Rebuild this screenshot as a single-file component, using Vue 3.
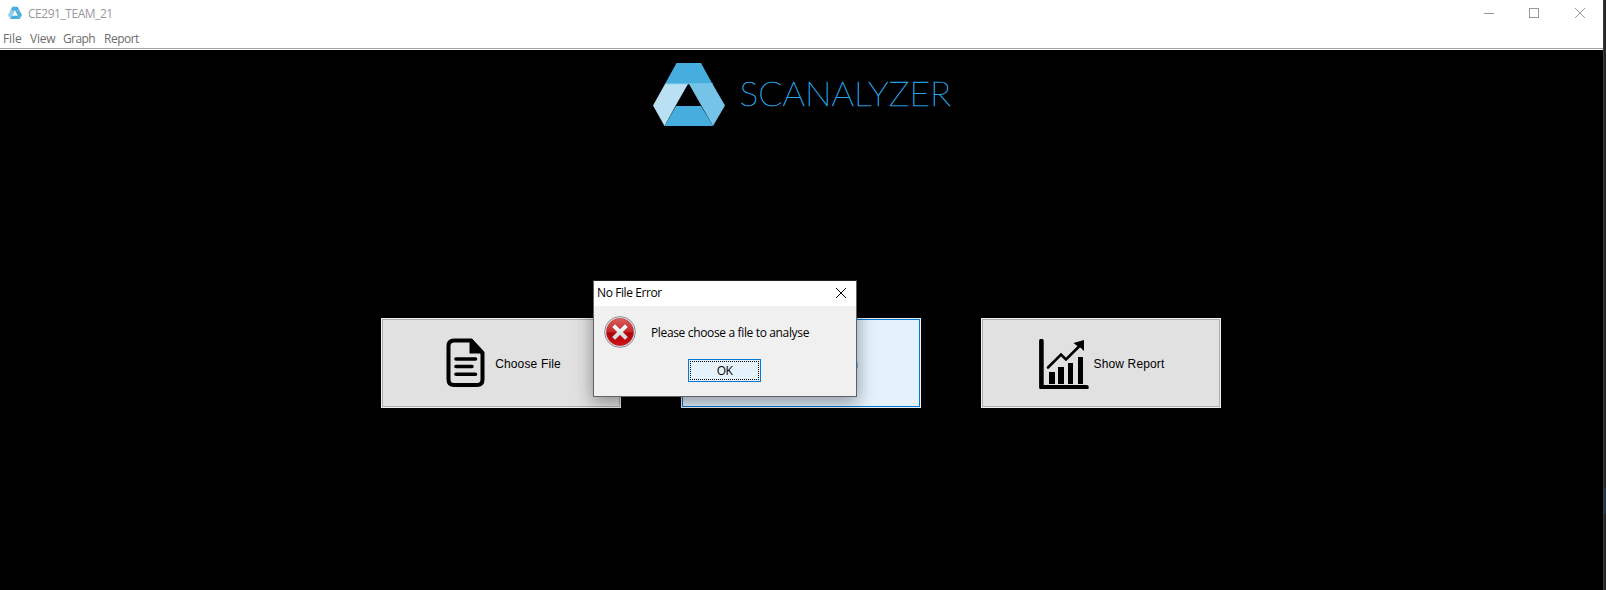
<script setup>
const menus = [
  { label: 'File', cls: 'm-file' },
  { label: 'View', cls: 'm-view' },
  { label: 'Graph', cls: 'm-graph' },
  { label: 'Report', cls: 'm-report' },
]
</script>

<template>
  <div class="screen">
    <div class="window">
      <header class="titlebar">
        <svg class="app-icon" width="14" height="14" viewBox="0 0 72 64">
          <path fill="#45aede" d="M23 0H49L60 21H12Z" />
          <path fill="#8fcdea" d="M12 21H36L12 63L0 42Z" />
          <path fill="#4fb0dd" d="M36 21H60L72 42L60 63Z" />
          <path fill="#45aede" d="M24 42H48L60 63H12Z" />
          <path fill="#eef8fd" d="M36 21L50 46H22Z" />
        </svg>
        <span class="title">CE291_TEAM_21</span>
        <svg class="controls" width="104" height="12" viewBox="0 0 104 12" fill="none" stroke="#999" shape-rendering="crispEdges">
          <path d="M0 5.500H10" />
          <rect x="45.500" y=".5" width="9" height="9" />
          <path d="M91 0L101 10M101 0L91 10" shape-rendering="auto" />
        </svg>
      </header>
      <nav class="menubar">
        <span v-for="m in menus" :key="m.label" :class="m.cls">{{ m.label }}</span>
      </nav>
      <main class="content">
        <div class="brand">
          <svg width="300" height="64" viewBox="0 0 300 64">
            <path fill="#45aede" d="M23.500 0H48L59.500 21H12Z" />
            <path fill="#b9e0f3" d="M12 21H35L23 42L11.500 63L0 42.500Z" />
            <path fill="#76c3e8" d="M36 21H59.500L72 42.500L60 63L48 42Z" />
            <path fill="#45aede" d="M23 43H48L60 63H11.500Z" />
            <path stroke="#76c3e8" d="M12 20.700H60" />
            <text class="wordmark" x="86.500" y="43" textLength="211.500" lengthAdjust="spacingAndGlyphs">SCANALYZER</text>
          </svg>
        </div>
        <div class="actions">
          <button class="action">
            <svg width="50" height="50" viewBox="0 0 50 50">
              <path fill="none" stroke="#000" stroke-width="4" d="M30 2.500H13Q7.500 2.500 7.500 8V41.500Q7.500 47 13 47H36Q41.500 47 41.500 41.500V15Z" />
              <path d="M28.500 1H31L43 13.500V15.500H28.500Z" />
              <path stroke="#000" stroke-width="3.600" stroke-linecap="round" d="M15 21H34.500M15 28.500H31M15 36.300H34.500" />
            </svg>
            <span class="t-choose">Choose File</span>
          </button>
          <button class="action active"><span class="tail">n</span></button>
          <button class="action report">
            <svg class="chart" width="50" height="50" viewBox="0 0 50 50">
              <path fill="none" stroke="#000" stroke-width="4.600" stroke-linecap="round" stroke-linejoin="round" d="M2.400 2V48.200H47.500" />
              <path d="M10 33H16V45H10ZM19 28H25V45H19ZM29 24H34V45H29ZM39 18H44V45H39Z" />
              <path fill="none" stroke="#000" stroke-width="2.600" stroke-linecap="round" d="M9 28.500L22 15.500L27 20.500L40 7.500" />
              <path d="M45 1V12L42 9L39.500 8L34.500 4Z" />
            </svg>
            <span class="t-show">Show Report</span>
          </button>
        </div>
      </main>
    </div>
    <aside class="edge"><i></i></aside>

    <section class="dialog">
      <header class="dlg-head">
        <span class="dlg-title">No File Error</span>
        <svg width="10" height="10" viewBox="0 0 10 10" stroke="#000"><path d="M0 0L10 10M10 0L0 10" /></svg>
      </header>
      <div class="dlg-body">
        <svg class="error" width="32" height="32" viewBox="0 0 32 32">
          <defs>
            <linearGradient id="red" x1="0" y1="0" x2="0" y2="1">
              <stop offset="0" stop-color="#d9605e" /><stop offset=".48" stop-color="#c5292b" />
              <stop offset=".55" stop-color="#ad0007" /><stop offset="1" stop-color="#d11318" />
            </linearGradient>
            <linearGradient id="cross" x1="0" y1="0" x2="0" y2="1">
              <stop offset="0" stop-color="#fff" /><stop offset="1" stop-color="#cfcfcf" />
            </linearGradient>
          </defs>
          <circle cx="16" cy="16" r="15.400" fill="#e9e9e9" stroke="#8c8f90" />
          <circle cx="16" cy="16" r="13.700" fill="url(#red)" stroke="#a84345" stroke-width=".5" />
          <path fill="url(#cross)" stroke="#a33" stroke-width=".4" d="M8 11L11 8L16 13L21 8L24 11L19 16L24 21L21 24L16 19L11 24L8 21L13 16Z" />
        </svg>
        <span class="message">Please choose a file to analyse</span>
      </div>
      <button class="ok"><span>OK</span></button>
    </section>
  </div>
</template>

<style scoped>
.screen {
  position: relative;
  display: flex;
  width: 1606px;
  height: 590px;
  overflow: hidden;
  background: #000;
  font: 12px/16px "Open Sans", "Noto Sans", sans-serif;
}
.window { width: 1603px; display: flex; flex-direction: column; }
.titlebar { display: flex; height: 28px; background: #fff; color: #999; box-sizing: border-box; padding: 6px 15px 0 8px; }
.title { margin-left: 6px; letter-spacing: -.46px; height: 16px; }
.controls { margin: 2px 0 0 auto; }
.menubar { display: flex; height: 22px; box-sizing: border-box; background: #fff; color: #6d6d6d; padding: 3px 0 0 3px; box-shadow: inset 0 -1px #fff, inset 0 -2px #9da19f; }
.menubar span { flex: none; }
.m-file { width: 27px; letter-spacing: -.1px; }
.m-view { width: 33px; letter-spacing: -.2px; }
.m-graph { width: 41px; letter-spacing: -.6px; }
.m-report { letter-spacing: -.5px; }
.content { flex: 1; display: flex; flex-direction: column; background: #000; }
.brand { height: 268px; box-sizing: border-box; padding: 13px 0 0 653px; }
.brand svg { display: block; }
.wordmark { font: 100 33px Lato, sans-serif; fill: #27a8e9; stroke: #27a8e9; stroke-width: .5px; }
.actions { display: flex; gap: 60px; padding-left: 381px; }
.action {
  width: 240px;
  height: 90px;
  box-sizing: border-box;
  padding: 0;
  display: flex;
  align-items: center;
  justify-content: center;
  gap: 4px;
  border: 1px solid #f0f0f0;
  background: #e1e1e1;
  box-shadow: inset 0 0 0 1px #adadad;
  color: #000;
  font: 12px/16px "Liberation Sans", Arial, sans-serif;
}
.action svg { flex: none; }
.action span { padding-top: 2px; }
.action .chart { margin-top: 1px; }
.active { background: #e5f1fb; box-shadow: inset 0 0 0 1px #0078d7; justify-content: flex-end; padding-right: 62px; }
.report { padding-left: 2px; }
.t-choose, .t-show { white-space: nowrap; letter-spacing: .15px; }
.edge { width: 3px; background: #252525; box-shadow: inset 1px 0 #3c3c3c; }
.edge i { display: block; height: 26px; margin: 488px 0 0 1px; background: #26344a; }
.dialog {
  position: absolute;
  left: 593px;
  top: 280px;
  width: 264px;
  height: 117px;
  box-sizing: border-box;
  border: 1px solid #5f6164;
  border-top-color: #222;
  background: #f0f0f0;
  box-shadow: 0 5px 16px 1px rgba(0, 0, 0, .36);
  color: #000;
}
.dlg-head { display: flex; justify-content: space-between; height: 25px; box-sizing: border-box; padding: 4px 10px 0 3px; background: #fff; }
.dlg-head svg { margin-top: 3px; overflow: visible; }
.dlg-title { letter-spacing: -.4px; height: 16px; }
.dlg-body { display: flex; padding: 10px 0 0 10px; height: 43px; box-sizing: content-box; }
.message { margin: 9px 0 0 15px; letter-spacing: -.35px; white-space: nowrap; height: 16px; }
.ok {
  display: block;
  width: 73px;
  height: 23px;
  margin: 0 0 0 94px;
  padding: 0;
  box-sizing: border-box;
  border: 1px solid #0078d7;
  background: #e5f1fb;
  outline: 1px dotted #000;
  outline-offset: -3px;
  color: #000;
  font: inherit;
}
.ok span { letter-spacing: -.5px; }
</style>
